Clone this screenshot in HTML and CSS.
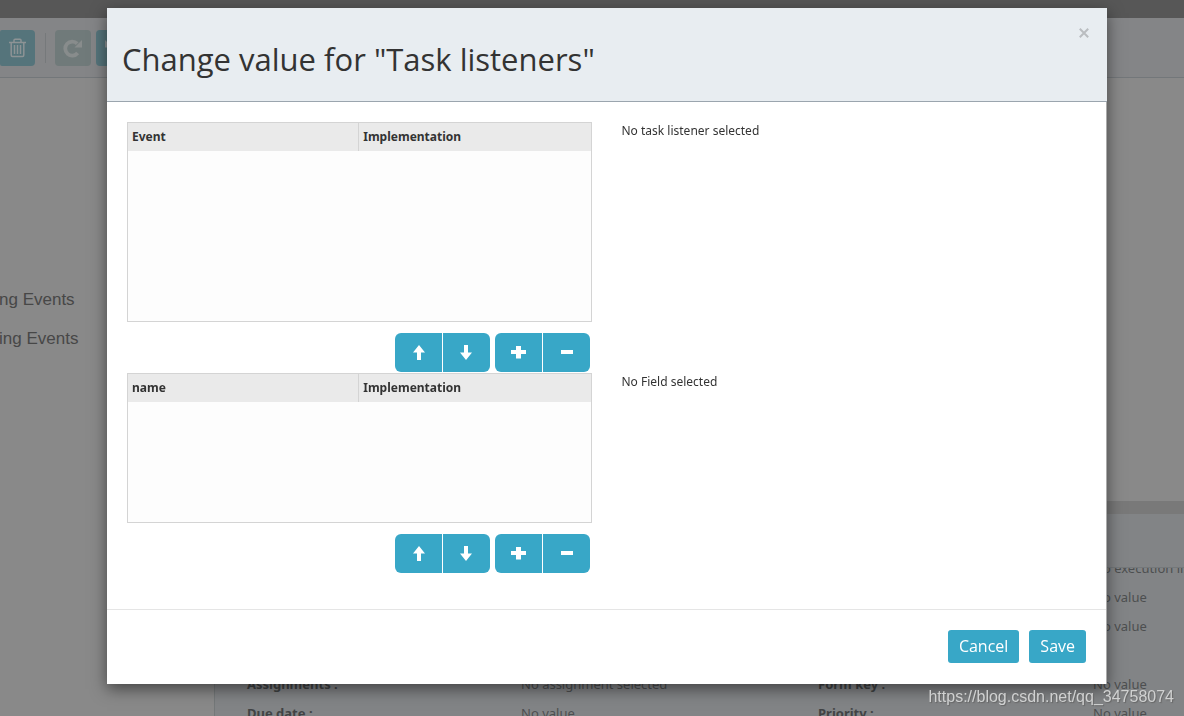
FILE: index.html
```html
<!DOCTYPE html>
<html lang="en">
<head>
<meta charset="utf-8">
<title>Change value for "Task listeners"</title>
<link rel="stylesheet" href="styles.css">
</head>
<body>
<svg class="sprite" aria-hidden="true">
  <symbol id="up" viewBox="0 0 16 16"><path d="M9 0L15 7.6H11V15H7V7.6H3Z"/></symbol>
  <symbol id="down" viewBox="0 0 16 16"><path d="M8 15L14 7.4H10V0H6V7.4H2Z"/></symbol>
  <symbol id="plus" viewBox="0 0 16 16"><path d="M6 1H11V5H16V9H11V13.5H6V9H1V5H6Z"/></symbol>
  <symbol id="minus" viewBox="0 0 16 16"><path d="M3 5H15V9H3Z"/></symbol>
</svg>

<div class="editor">
  <div class="topbar"></div>
  <div class="toolbar">
    <button class="tool tool-first" aria-label="Delete">
      <svg width="18" height="20" viewBox="0 0 18 20"><path class="line" d="M0 4.5H17M5 4V2.2Q5 1.2 6 1.2H11Q12 1.2 12 2.2V4M2.2 4.5V17Q2.2 18.5 3.5 18.5H13.5Q14.8 18.5 14.8 17V4.5M5.5 7V16M8.5 7V16M11.5 7V16"/></svg>
    </button>
    <span class="divider"></span>
    <button class="tool tool-off" aria-label="Redo">
      <svg width="20" height="20" viewBox="0 0 20 20"><path class="line thick" d="M14.7 15A7 7 0 1 1 14.2 5.6"/><path d="M19 2V9.5H11.5Z"/></svg>
    </button>
    <button class="tool" aria-label="Undo">
      <svg width="20" height="20" viewBox="0 0 20 20"><path class="line thick" d="M5.3 15A7 7 0 1 0 5.8 5.6"/><path d="M1 2V9.5H8.5Z"/></svg>
    </button>
  </div>
  <div class="workspace">
    <ul class="palette">
      <li>ng Events</li>
      <li>ing Events</li>
    </ul>
    <div class="main">
      <div class="canvas"></div>
      <div class="splitter"></div>
      <div class="properties">
        <div class="properties-title"></div>
        <div class="properties-body">
          <div class="grid">
            <b></b><span></span><b></b><span>No execution listeners</span>
            <b></b><span></span><b></b><span>No value</span>
            <b></b><span></span><b></b><span>No value</span>
            <b></b><span></span><b></b><span></span>
            <b>Assignments :</b><span>No assignment selected</span><b>Form key :</b><span>No value</span>
            <b>Due date :</b><span>No value</span><b>Priority :</b><span>No value</span>
          </div>
        </div>
      </div>
    </div>
  </div>
</div>

<div class="overlay">
  <div class="modal" role="dialog" aria-labelledby="title">
    <div class="modal-header">
      <h2 id="title">Change value for "Task listeners"</h2>
      <button class="close" aria-label="Close"><svg width="10" height="10" viewBox="0 0 10 10"><path class="line cross" d="M0.8 0.8L9.2 9.2M9.2 0.8L0.8 9.2"/></svg></button>
    </div>
    <div class="modal-body">
      <div class="row">
        <div class="list">
          <div class="table-box tall">
            <table><thead><tr><th scope="col">Event</th><th scope="col">Implementation</th></tr></thead></table>
          </div>
          <div class="actions">
            <div class="group">
              <button aria-label="Move up"><svg width="16" height="16"><use href="#up"/></svg></button>
              <button aria-label="Move down"><svg width="16" height="16"><use href="#down"/></svg></button>
            </div>
            <div class="group">
              <button aria-label="Add"><svg width="16" height="16"><use href="#plus"/></svg></button>
              <button aria-label="Remove"><svg width="16" height="16"><use href="#minus"/></svg></button>
            </div>
          </div>
        </div>
        <div class="detail">No task listener selected</div>
      </div>
      <div class="row">
        <div class="list">
          <div class="table-box">
            <table><thead><tr><th scope="col">name</th><th scope="col">Implementation</th></tr></thead></table>
          </div>
          <div class="actions">
            <div class="group">
              <button aria-label="Move up"><svg width="16" height="16"><use href="#up"/></svg></button>
              <button aria-label="Move down"><svg width="16" height="16"><use href="#down"/></svg></button>
            </div>
            <div class="group">
              <button aria-label="Add"><svg width="16" height="16"><use href="#plus"/></svg></button>
              <button aria-label="Remove"><svg width="16" height="16"><use href="#minus"/></svg></button>
            </div>
          </div>
        </div>
        <div class="detail">No Field selected</div>
      </div>
    </div>
    <div class="modal-footer">
      <button>Cancel</button>
      <button>Save</button>
    </div>
  </div>
</div>
<div class="watermark">https://blog.csdn.net/qq_34758074</div>
</body>
</html>
```
FILE: styles.css
```css
* { box-sizing: border-box; }
body {
  margin: 0;
  overflow: hidden;
  color: #333;
  font-family: "Noto Sans", "Open Sans", sans-serif;
  font-size: 12px;
}
button { border: 0; padding: 0; font: inherit; }
svg { display: block; fill: currentColor; }
.line { fill: none; stroke: currentColor; stroke-width: 1.5; }
.thick { stroke-width: 3.8; }
.cross { stroke-width: 2; }
.sprite { position: absolute; width: 0; height: 0; }

.editor { display: flex; flex-direction: column; height: 100vh; background: #898989; }
.topbar { height: 18px; background: #575757; }
.toolbar {
  display: flex;
  align-items: center;
  height: 60px;
  background: #848587;
  border-bottom: 1px solid #73777a;
}
.tool {
  display: grid;
  place-items: center;
  width: 36px;
  height: 36px;
  margin-right: 5px;
  border-radius: 4px;
  background: #55747b;
  color: #8d9395;
}
.tool-first { width: 35px; margin-right: 10px; border-radius: 2px 4px 4px 2px; }
.tool-off { background: #707a7a; color: #888c8c; }
.divider { width: 1px; height: 30px; margin-right: 9px; background: #76797b; }
.workspace { display: flex; flex: 1; min-height: 0; }
.palette {
  width: 215px;
  margin: 0 0 0 -1px;
  padding: 202px 0 0;
  list-style: none;
  color: #474747;
  font: 17px/39px "Liberation Sans", Arial, sans-serif;
}
.main { display: flex; flex: 1; flex-direction: column; min-width: 0; }
.canvas { flex: 1; }
.splitter { height: 13px; background: #797979; }
.properties { height: 202px; background: #828486; border-left: 1px solid #747879; }
.properties-title { height: 54px; border-bottom: 1px solid #74787a; }
.properties-body { overflow: hidden; }
.grid {
  display: grid;
  grid-template-columns: 274px 297px 275px 1fr;
  grid-auto-rows: 29px;
  margin-top: -14px;
  padding-left: 32px;
  color: #4d4f50;
  font-size: 13px;
  line-height: 29px;
  white-space: nowrap;
}
.grid b { color: #414344; }

.overlay { position: fixed; inset: 0; padding: 8px 77px 0 107px; }
.modal { background: #fff; box-shadow: 0 5px 15px rgba(0, 0, 0, .5); border-right: 1px solid #aaa; }
.modal-header {
  display: flex;
  justify-content: space-between;
  align-items: flex-start;
  margin-right: -1px;
  padding: 20px 18px 20px 15px;
  background: #e8edf1;
  border-bottom: 1px solid #9ba5ae;
}
h2 { margin: 10px 0 0; font-family: "Open Sans", "Noto Sans", sans-serif; font-size: 31px; font-weight: 400; line-height: 43px; }
.close { background: none; color: #babdc0; }
.modal-body { padding: 20px 20px 35px; }
.row { display: grid; grid-template-columns: 1fr 1fr; }
.list { margin-right: 15px; }
.table-box { height: 150px; background: #fdfdfd; border: 1px solid #d4d4d4; }
.tall { height: 200px; }
table { width: 100%; table-layout: fixed; border-collapse: separate; border-spacing: 0; }
th {
  height: 28px;
  padding: 0 4px;
  background: #eaeaea;
  text-align: left;
  line-height: 18px;
}
th:first-child { border-right: 1px solid #d4d4d4; }
.actions { display: flex; justify-content: flex-end; gap: 5px; padding: 11px 2px 1px 0; }
.group { display: flex; gap: 1px; }
.actions button, .modal-footer button { background: #38a7c7; color: #fff; }
.actions button { display: grid; place-items: center; width: 47px; height: 39px; }
.group button:first-child { border-radius: 6px 0 0 6px; }
.group button:last-child { border-radius: 0 6px 6px 0; }
.detail { padding-left: 15px; line-height: 18px; }
.modal-footer {
  display: flex;
  justify-content: flex-end;
  gap: 10px;
  padding: 20px 20px 21px;
  border-top: 1px solid #e5e5e5;
}
.modal-footer button {
  height: 33px;
  padding: 0 11px 1px;
  border-radius: 3px;
  font-family: "Open Sans", "Noto Sans", sans-serif;
  font-size: 16px;
}

.watermark {
  position: fixed;
  right: 10px;
  bottom: 8px;
  color: #d0d1d1;
  font: 16px/22px "Liberation Sans", Arial, sans-serif;
  text-shadow: 1px 1px 1px #666;
}
```
